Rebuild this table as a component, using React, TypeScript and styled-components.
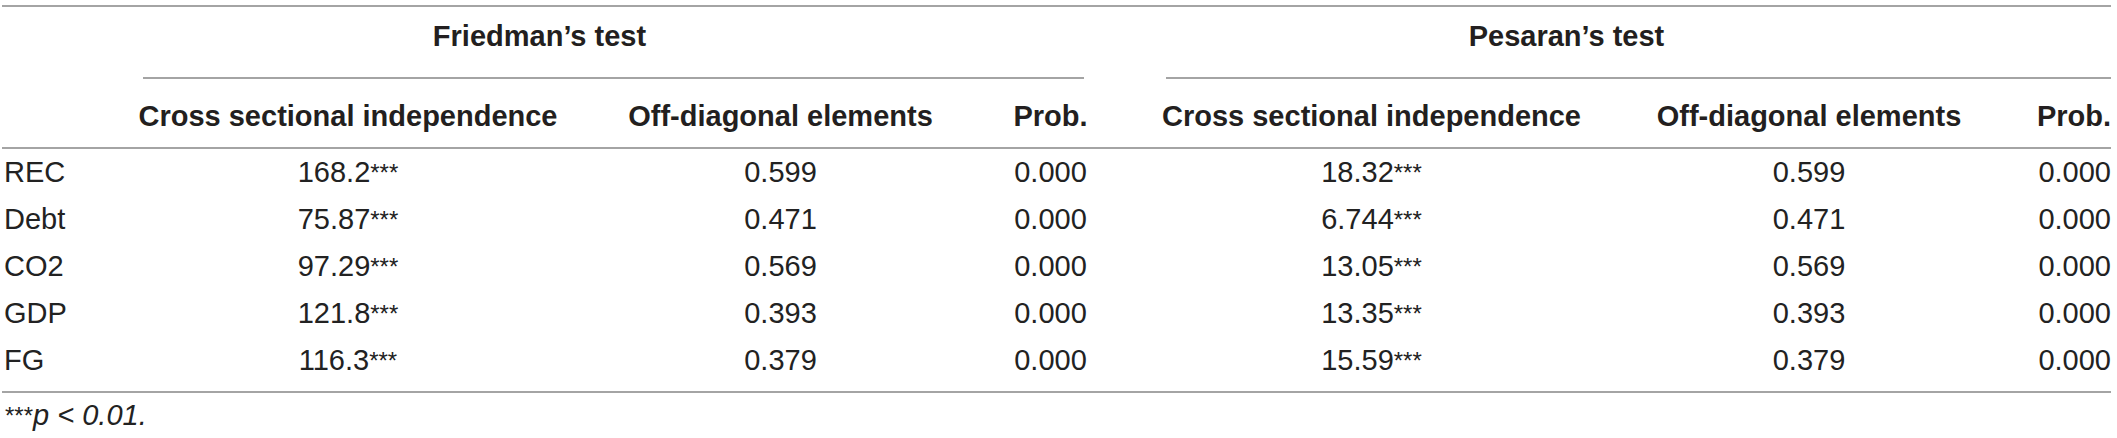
import React from "react";
import styled, { createGlobalStyle } from "styled-components";

const GlobalStyle = createGlobalStyle`
  html, body {
    margin: 0;
    padding: 0;
    background: #ffffff;
  }
  body {
    font-family: "Liberation Sans", Arial, Helvetica, sans-serif;
    color: #231f20;
  }
`;

const COLUMNS = "105px 482px 383px 157px 485px 390px 107px";
const RULE = "2px solid #a4a4a4";

const Table = styled.div`
  width: 2109px;
  margin: 5px 0 0 2px;
  border-top: ${RULE};
  font-size: 29px;
`;

const GridRow = styled.div`
  display: grid;
  grid-template-columns: ${COLUMNS};
`;

const GroupRow = styled(GridRow)`
  height: 70px;
`;

const GroupHead = styled.div<{ $col: string }>`
  grid-column: ${(p) => p.$col};
  padding-top: 13px;
  line-height: 33px;
  font-weight: 700;
  text-align: center;
  white-space: nowrap;
`;

const RuleRow = styled(GridRow)`
  height: 2px;
`;

const GroupRule = styled.div<{ $col: string; $left: number; $right: number }>`
  grid-column: ${(p) => p.$col};
  margin-left: ${(p) => p.$left}px;
  margin-right: ${(p) => p.$right}px;
  border-top: ${RULE};
`;

const HeadRow = styled(GridRow)`
  border-bottom: ${RULE};
`;

const HeadCell = styled.div<{ $align: "left" | "center" | "right" }>`
  padding: 21px 0 14px;
  line-height: 33px;
  font-weight: 700;
  text-align: ${(p) => p.$align};
  white-space: nowrap;
`;

const Body = styled.div`
  padding-bottom: 7px;
  border-bottom: ${RULE};
`;

const DataRow = styled(GridRow)`
  height: 47px;
`;

const Cell = styled.div<{ $align: "left" | "center" | "right" }>`
  line-height: 47px;
  text-align: ${(p) => p.$align};
  padding-left: ${(p) => (p.$align === "left" ? "2px" : "0")};
  color: #222;
  white-space: nowrap;
`;

const Stars = styled.span`
  font-size: 24px;
  vertical-align: 1px;
  font-style: normal;
`;

const Footnote = styled.div`
  padding: 6px 0 0 3px;
  line-height: 33px;
  font-style: italic;
  color: #222;
`;

type Row = {
  label: string;
  f: string;
  fOff: string;
  fProb: string;
  p: string;
  pOff: string;
  pProb: string;
};

const rows: Row[] = [
  { label: "REC", f: "168.2", fOff: "0.599", fProb: "0.000", p: "18.32", pOff: "0.599", pProb: "0.000" },
  { label: "Debt", f: "75.87", fOff: "0.471", fProb: "0.000", p: "6.744", pOff: "0.471", pProb: "0.000" },
  { label: "CO2", f: "97.29", fOff: "0.569", fProb: "0.000", p: "13.05", pOff: "0.569", pProb: "0.000" },
  { label: "GDP", f: "121.8", fOff: "0.393", fProb: "0.000", p: "13.35", pOff: "0.393", pProb: "0.000" },
  { label: "FG", f: "116.3", fOff: "0.379", fProb: "0.000", p: "15.59", pOff: "0.379", pProb: "0.000" },
];

const headers: { text: string; align: "left" | "center" | "right" }[] = [
  { text: "", align: "left" },
  { text: "Cross sectional independence", align: "center" },
  { text: "Off-diagonal elements", align: "center" },
  { text: "Prob.", align: "center" },
  { text: "Cross sectional independence", align: "center" },
  { text: "Off-diagonal elements", align: "center" },
  { text: "Prob.", align: "right" },
];

export default function App() {
  return (
    <>
      <GlobalStyle />
      <Table>
        <GroupRow>
          <GroupHead $col="2 / span 2">Friedman’s test</GroupHead>
          <GroupHead $col="5 / span 2">Pesaran’s test</GroupHead>
        </GroupRow>
        <RuleRow>
          <GroupRule $col="2 / 5" $left={36} $right={45} />
          <GroupRule $col="5 / 8" $left={37} $right={0} />
        </RuleRow>
        <HeadRow>
          {headers.map((h, i) => (
            <HeadCell key={i} $align={h.align}>
              {h.text}
            </HeadCell>
          ))}
        </HeadRow>
        <Body>
          {rows.map((r) => (
            <DataRow key={r.label}>
              <Cell $align="left">{r.label}</Cell>
              <Cell $align="center">
                {r.f}
                <Stars>***</Stars>
              </Cell>
              <Cell $align="center">{r.fOff}</Cell>
              <Cell $align="center">{r.fProb}</Cell>
              <Cell $align="center">
                {r.p}
                <Stars>***</Stars>
              </Cell>
              <Cell $align="center">{r.pOff}</Cell>
              <Cell $align="right">{r.pProb}</Cell>
            </DataRow>
          ))}
        </Body>
        <Footnote>
          <Stars>***</Stars>p &lt; 0.01.
        </Footnote>
      </Table>
    </>
  );
}
